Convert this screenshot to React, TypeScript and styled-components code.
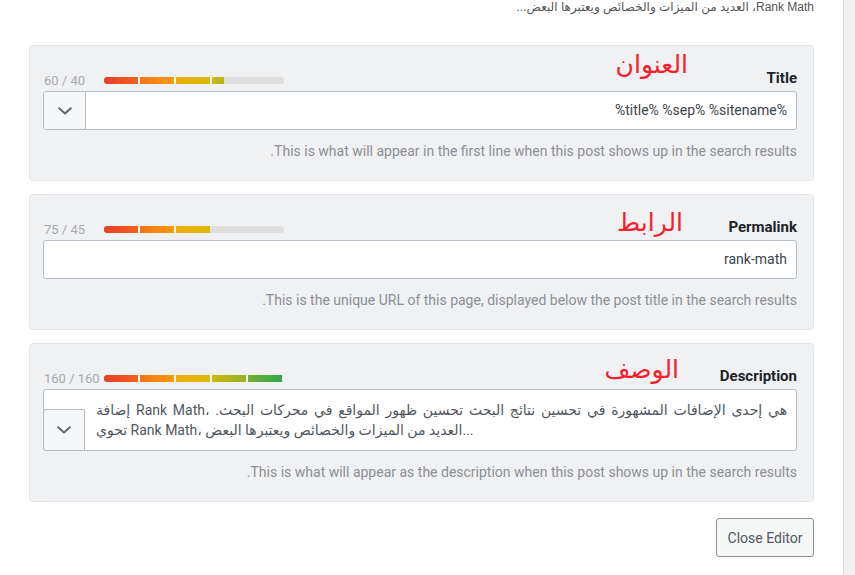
import styled, { createGlobalStyle } from "styled-components";

const GlobalStyle = createGlobalStyle`
  html, body {
    margin: 0;
    padding: 0;
    background: #fff;
  }
  body {
    font-family: Roboto, "DejaVu Sans", sans-serif;
    -webkit-font-smoothing: antialiased;
  }
  * {
    box-sizing: border-box;
  }
`;

const fields = [
  {
    label: "Title",
    note: "العنوان",
    noteTop: 2,
    noteRight: 125,
    count: "60 / 40",
    pct: 66.7,
    value: "%title% %sep% %sitename%",
    chevron: true,
    help: "This is what will appear in the first line when this post shows up in the search results.",
  },
  {
    label: "Permalink",
    note: "الرابط",
    noteTop: 11,
    noteRight: 130,
    count: "75 / 45",
    pct: 59,
    value: "rank-math",
    chevron: false,
    help: "This is the unique URL of this page, displayed below the post title in the search results.",
  },
];

const Chevron = () => (
  <svg width="14" height="8" viewBox="0 0 14 8" fill="none">
    <polyline points="1.2,1.2 7,6.6 12.8,1.2" stroke="#646970" strokeWidth="2" strokeLinecap="round" strokeLinejoin="round" />
  </svg>
);

const Meter = ({ count, pct }: { count: string; pct: number }) => (
  <MeterRow>
    <Counter>{count}</Counter>
    <Track>
      <Fill style={{ width: `${pct}%` }} />
    </Track>
  </MeterRow>
);

const App = () => {
  return (
    <>
      <GlobalStyle />
      <Page>
        <Main>
          <Snippet>Rank Math، العديد من الميزات والخصائص ويعتبرها البعض...</Snippet>
          {fields.map((f) => (
            <Panel key={f.label}>
              <Note $top={f.noteTop} $right={f.noteRight}>
                {f.note}
              </Note>
              <Header>
                <Label>{f.label}</Label>
                <Meter count={f.count} pct={f.pct} />
              </Header>
              <InputGroup>
                <Field>{f.value}</Field>
                {f.chevron && (
                  <Addon>
                    <Chevron />
                  </Addon>
                )}
              </InputGroup>
              <Help>{f.help}</Help>
            </Panel>
          ))}
          <Panel>
            <Note $top={9} $right={134}>
              الوصف
            </Note>
            <Header>
              <Label>Description</Label>
              <Meter count="160 / 160" pct={100} />
            </Header>
            <TextArea>
              <TextLine $spread={2.3}>
                إضافة Rank Math، هي إحدى الإضافات المشهورة في تحسين نتائج البحث تحسين ظهور المواقع في محركات البحث.{"\u200F"}
              </TextLine>
              <TextLine>تحوي Rank Math، العديد من الميزات والخصائص ويعتبرها البعض...</TextLine>
              <CornerAddon>
                <Chevron />
              </CornerAddon>
            </TextArea>
            <Help>This is what will appear as the description when this post shows up in the search results.</Help>
          </Panel>
          <CloseButton>Close Editor</CloseButton>
        </Main>
        <SideStrip />
      </Page>
    </>
  );
};

export default App;

const Page = styled.div`
  display: flex;
  width: 855px;
  height: 575px;
  overflow: hidden;
`;

const Main = styled.div`
  flex: 1;
  direction: rtl;
  display: flex;
  flex-direction: column;
  align-items: flex-start;
  padding: 0 29px;
`;

const SideStrip = styled.div`
  width: 12px;
  background: #f0f0f1;
  border-left: 1px solid #dcdcde;
`;

const Snippet = styled.div`
  width: 100%;
  height: 15px;
  margin-bottom: 30px;
  font-family: "Liberation Sans", "DejaVu Sans", sans-serif;
  font-size: 12px;
  line-height: 15px;
  color: #555;
  white-space: nowrap;
  overflow: hidden;
`;

const Panel = styled.section`
  position: relative;
  width: 100%;
  margin-bottom: 13px;
  padding: 23px 16px 19px 13px;
  background: #f0f1f3;
  border: 1px solid #e3e5e8;
  border-radius: 4px;
`;

const Note = styled.div<{ $top: number; $right: number }>`
  position: absolute;
  top: ${({ $top }) => $top}px;
  right: ${({ $right }) => $right}px;
  font-family: "DejaVu Sans", sans-serif;
  font-size: 25px;
  line-height: 34px;
  color: #f2212b;
`;

const Header = styled.div`
  display: flex;
  justify-content: space-between;
  align-items: flex-end;
  height: 22px;
`;

const Label = styled.div`
  margin-bottom: 3px;
  font-size: 15px;
  font-weight: 700;
  line-height: 20px;
  color: #1d2327;
`;

const MeterRow = styled.div`
  direction: ltr;
  display: flex;
  align-items: center;
  height: 20px;
  margin-bottom: 1px;
`;

const Counter = styled.span`
  width: 61px;
  padding-left: 1px;
  font-size: 13px;
  color: #a7aaad;
  white-space: nowrap;
`;

const Track = styled.div`
  width: 180px;
  height: 7px;
  background: #dfdfdf;
  border-radius: 3px;
  overflow: hidden;
`;

const Fill = styled.div`
  height: 100%;
  background: repeating-linear-gradient(to right, transparent 0 34px, #fff 34px 36px),
    linear-gradient(
      to right,
      #e63f2a 0%,
      #f1611d 19%,
      #f5761a 21%,
      #f89c0b 39%,
      #efac08 41%,
      #dcb909 59%,
      #ccb60f 61%,
      #8fb226 79%,
      #72ae34 81%,
      #2ea64a 100%
    );
  background-size: 180px 100%;
  background-repeat: no-repeat;
`;

const InputGroup = styled.div`
  display: flex;
  height: 39px;
  background: #fff;
  border: 1px solid #b4bcc5;
  border-radius: 3px;
  overflow: hidden;
`;

const Field = styled.div`
  flex: 1;
  direction: ltr;
  text-align: right;
  padding: 0 9px;
  font-size: 14px;
  line-height: 37px;
  color: #3c434a;
`;

const Addon = styled.div`
  width: 42px;
  display: flex;
  align-items: center;
  justify-content: center;
  background: #f6f7f9;
  border-right: 1px solid #b4bcc5;
`;

const TextArea = styled.div`
  position: relative;
  height: 62px;
  direction: ltr;
  text-align: left;
  padding: 11px 8px 0 52px;
  background: #fff;
  border: 1px solid #b4bcc5;
  border-radius: 3px;
  font-size: 14px;
  line-height: 19.5px;
  color: #50575e;
`;

const TextLine = styled.div<{ $spread?: number }>`
  white-space: nowrap;
  overflow: hidden;
  word-spacing: ${({ $spread = 0 }) => $spread}px;
`;

const CornerAddon = styled.div`
  position: absolute;
  left: -1px;
  bottom: -1px;
  width: 42px;
  height: 42px;
  display: flex;
  align-items: center;
  justify-content: center;
  background: #f6f7f9;
  border: 1px solid #b4bcc5;
  border-radius: 3px 0 0 3px;
`;

const Help = styled.div`
  margin-top: 11px;
  font-size: 14px;
  line-height: 20px;
  color: #8c8f94;
`;

const CloseButton = styled.button`
  margin-top: 3px;
  width: 98px;
  height: 39px;
  padding: 0;
  font-family: Roboto, "DejaVu Sans", sans-serif;
  font-size: 14px;
  color: #50575e;
  background: #f6f7f7;
  border: 1px solid #8c8f94;
  border-radius: 3px;
`;
